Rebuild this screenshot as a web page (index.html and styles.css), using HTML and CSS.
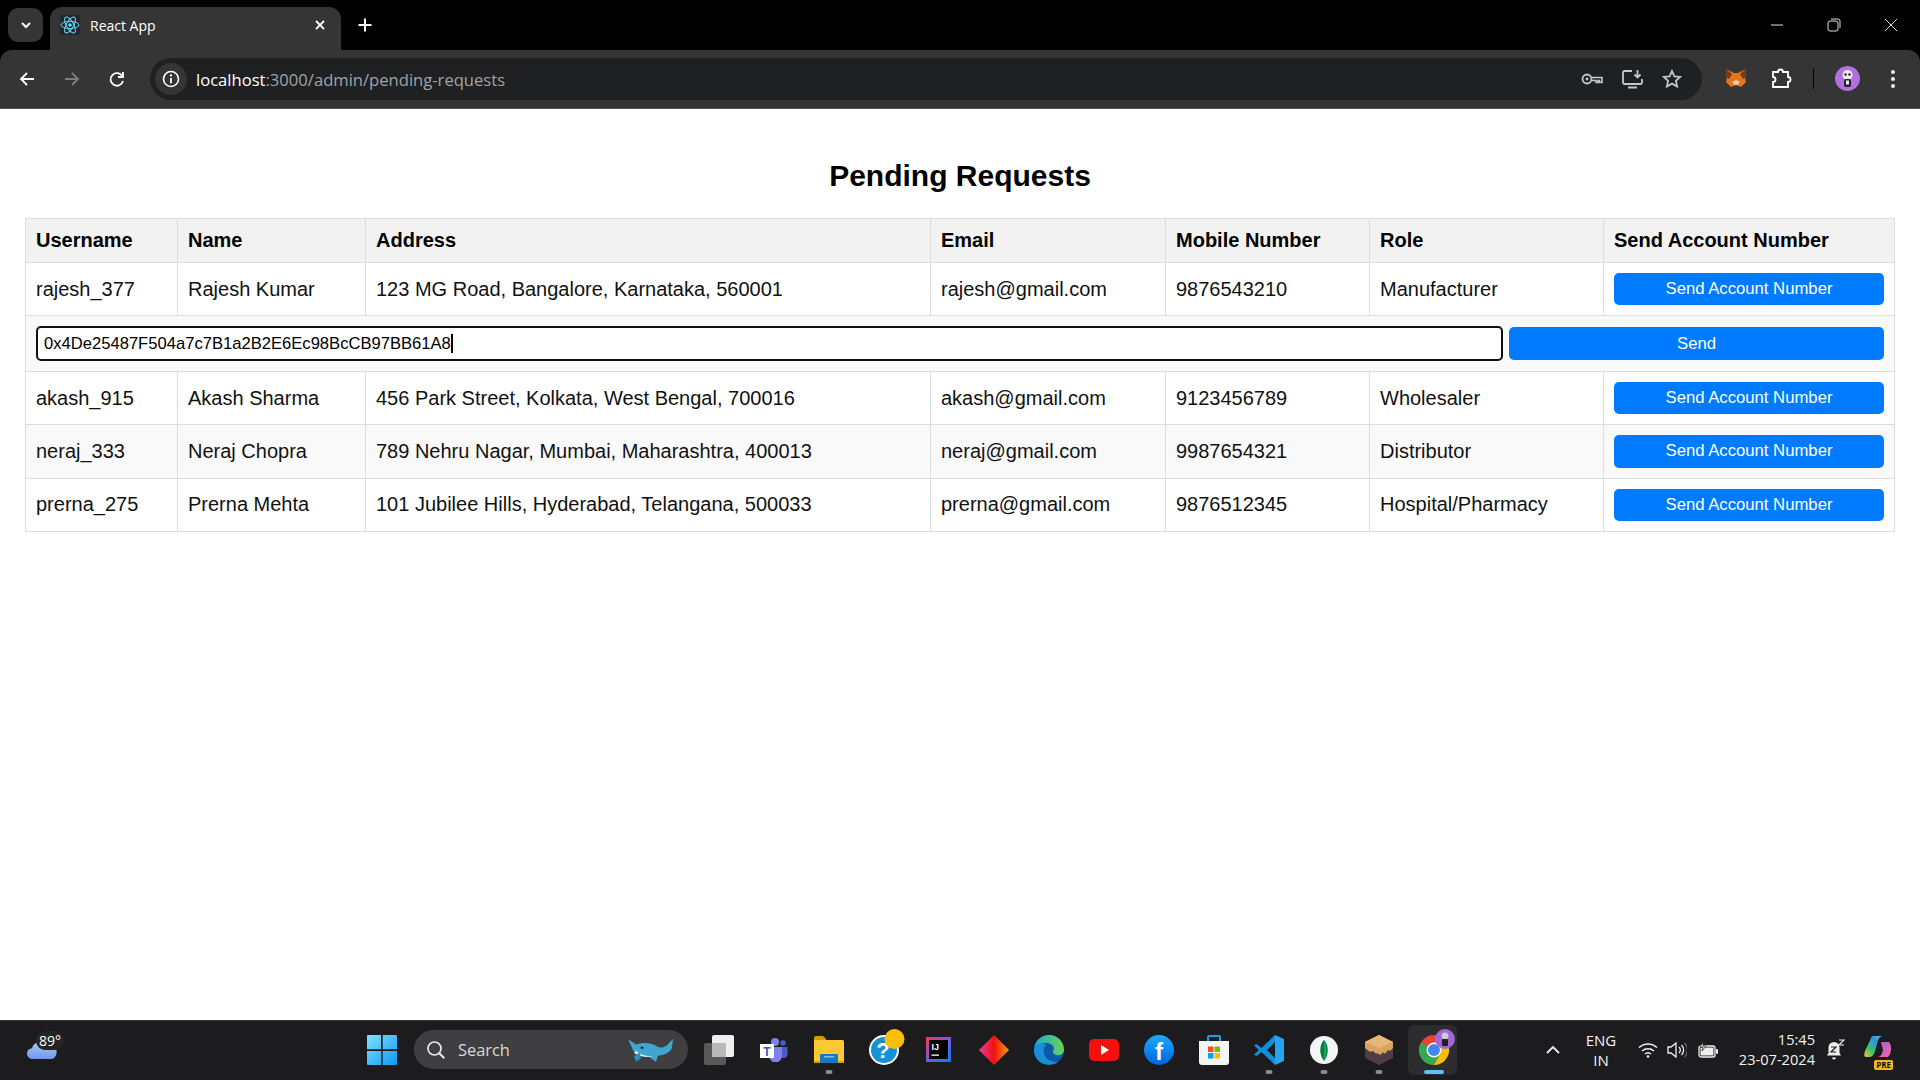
FILE: index.html
```html
<!DOCTYPE html>
<html lang="en">
<head>
  <meta charset="UTF-8">
  <title>React App</title>
  <link rel="stylesheet" href="styles.css">
</head>
<body>

<!-- Browser window top -->
<header class="browser">
  <div class="tabbar">
    <button class="tab-menu">
      <svg width="14" height="14" viewBox="0 0 14 14"><path d="M3 5l4 4 4-4" fill="none" stroke="#fff" stroke-width="2"/></svg>
    </button>
    <div class="tab">
      <svg class="favicon" width="20" height="20" viewBox="0 0 20 20">
        <rect width="20" height="20" rx="2" fill="#23272b"/>
        <g fill="none" stroke="#61dafb" stroke-width="1">
          <ellipse cx="10" cy="10" rx="9" ry="3.6"/>
          <ellipse cx="10" cy="10" rx="9" ry="3.6" transform="rotate(60 10 10)"/>
          <ellipse cx="10" cy="10" rx="9" ry="3.6" transform="rotate(120 10 10)"/>
        </g>
        <circle cx="10" cy="10" r="1.8" fill="#61dafb"/>
      </svg>
      <span class="tab-title">React App</span>
      <svg class="tab-close" width="12" height="12" viewBox="0 0 12 12"><path d="M2 2l8 8M10 2l-8 8" stroke="#fff" stroke-width="1.8"/></svg>
    </div>
    <svg class="tab-new" width="16" height="16" viewBox="0 0 16 16"><path d="M8 1.500v13M1.500 8h13" stroke="#fff" stroke-width="2"/></svg>
    <div class="window-controls">
      <svg width="14" height="14" viewBox="0 0 14 14"><path d="M1 7h12" stroke="#ddd" stroke-width="1"/></svg>
      <svg width="14" height="14" viewBox="0 0 14 14"><rect x="1" y="3" width="10" height="10" rx="2" fill="none" stroke="#ddd"/><path d="M4 1h7a2 2 0 0 1 2 2v7" fill="none" stroke="#ddd"/></svg>
      <svg width="14" height="14" viewBox="0 0 14 14"><path d="M1 1l12 12M13 1L1 13" stroke="#ddd" stroke-width="1"/></svg>
    </div>
  </div>

  <div class="toolbar">
    <div class="nav-buttons">
      <svg width="18" height="18" viewBox="0 0 18 18"><path d="M16 9H3M9 3L3 9l6 6" fill="none" stroke="#fff" stroke-width="1.800"/></svg>
      <svg width="18" height="18" viewBox="0 0 18 18"><path d="M2 9h13M9 3l6 6-6 6" fill="none" stroke="#7c7c7c" stroke-width="1.800"/></svg>
      <svg width="18" height="18" viewBox="0 0 18 18"><path d="M14.500 6.500A6.300 6.300 0 1 0 15 11M15 2v5h-5" fill="none" stroke="#fff" stroke-width="1.800"/></svg>
    </div>
    <div class="omnibox">
      <span class="site-info">
        <svg width="18" height="18" viewBox="0 0 18 18"><circle cx="9" cy="9" r="7.500" fill="none" stroke="#fff" stroke-width="1.600"/><path d="M9 8v5.200" stroke="#fff" stroke-width="1.800"/><circle cx="9" cy="5.400" r="1.100" fill="#fff"/></svg>
      </span>
      <span class="url"><span class="url-host">localhost</span>:3000/admin/pending-requests</span>
      <div class="omnibox-icons">
        <svg width="22" height="14" viewBox="0 0 22 14"><circle cx="6" cy="7" r="4.500" fill="none" stroke="#c4c7c5" stroke-width="1.800"/><circle cx="6" cy="7" r="1.400" fill="#c4c7c5"/><path d="M10.500 5.500h10.500v5h-2.500v-2h-1.500v2h-2v-2h-4.500" fill="none" stroke="#c4c7c5" stroke-width="1.600"/></svg>
        <svg width="21" height="20" viewBox="0 0 21 20"><path d="M10 2H2.500a1.500 1.500 0 0 0-1.500 1.500v10A1.500 1.500 0 0 0 2.500 15h16a1.500 1.500 0 0 0 1.500-1.500V10M6 18.500h9" fill="none" stroke="#c4c7c5" stroke-width="1.800"/><path d="M15.500 1v7M12.500 5.500l3 3 3-3" fill="none" stroke="#c4c7c5" stroke-width="1.800"/></svg>
        <svg width="20" height="20" viewBox="0 0 20 20"><path d="M10 2l2.400 5.300 5.800.6-4.300 3.900 1.200 5.700L10 14.600l-5.100 2.900 1.200-5.700L1.800 7.900l5.800-.6z" fill="none" stroke="#c4c7c5" stroke-width="1.800"/></svg>
      </div>
    </div>
    <div class="extensions">
      <svg class="ext-fox" width="22" height="21" viewBox="0 0 22 21">
        <path d="M1 1l8 4h4l8-4-1 8 1 5-5 5-2-1h-6l-2 1-5-5 1-5z" fill="#e2761b"/>
        <path d="M1 1l6 5-3 5-3-2zM21 1l-6 5 3 5 3-2z" fill="#763d16"/>
        <path d="M7 14l4 5 4-5-4-2z" fill="#f6c9a0"/>
        <path d="M9 17h4l-2 2z" fill="#233447"/>
      </svg>
      <svg class="ext-puzzle" width="21" height="21" viewBox="0 0 21 21"><path d="M2 4h5a2.500 2.500 0 0 1 5 0h5v5a2.500 2.500 0 0 1 0 5v5H2v-5a2.500 2.500 0 0 0 0-5z" fill="none" stroke="#fff" stroke-width="1.800"/></svg>
      <span class="ext-sep"></span>
      <svg class="ext-avatar" width="25" height="25" viewBox="0 0 25 25">
        <circle cx="12.500" cy="12.500" r="12.500" fill="#b26fe0"/>
        <circle cx="12.500" cy="9" r="5" fill="#eee"/>
        <circle cx="10.500" cy="8.500" r="1.200" fill="#222"/>
        <circle cx="14.500" cy="8.500" r="1.200" fill="#222"/>
        <rect x="9" y="13" width="7" height="8" rx="2" fill="#222"/>
        <rect x="11" y="14.500" width="3" height="4" fill="#eee"/>
      </svg>
      <svg class="ext-dots" width="6" height="20" viewBox="0 0 6 20"><circle cx="3" cy="3" r="2" fill="#eee"/><circle cx="3" cy="10" r="2" fill="#eee"/><circle cx="3" cy="17" r="2" fill="#eee"/></svg>
    </div>
  </div>
</header>

<!-- Page content -->
<main class="requests-page">
  <h2 class="requests-title">Pending Requests</h2>
  <table class="requests-table">
    <colgroup>
      <col class="col-username"><col class="col-name"><col class="col-address"><col class="col-email"><col class="col-mobile"><col class="col-role"><col class="col-action">
    </colgroup>
    <thead>
      <tr>
        <th>Username</th>
        <th>Name</th>
        <th>Address</th>
        <th>Email</th>
        <th>Mobile Number</th>
        <th>Role</th>
        <th>Send Account Number</th>
      </tr>
    </thead>
    <tbody>
      <tr>
        <td>rajesh_377</td>
        <td>Rajesh Kumar</td>
        <td>123 MG Road, Bangalore, Karnataka, 560001</td>
        <td>rajesh@gmail.com</td>
        <td>9876543210</td>
        <td>Manufacturer</td>
        <td><button class="send-btn">Send Account Number</button></td>
      </tr>
      <tr>
        <td colspan="7">
          <div class="account-form">
            <div class="account-input"><span>0x4De25487F504a7c7B1a2B2E6Ec98BcCB97BB61A8</span><span class="account-caret"></span></div>
            <button class="send-btn send-btn-form">Send</button>
          </div>
        </td>
      </tr>
      <tr>
        <td>akash_915</td>
        <td>Akash Sharma</td>
        <td>456 Park Street, Kolkata, West Bengal, 700016</td>
        <td>akash@gmail.com</td>
        <td>9123456789</td>
        <td>Wholesaler</td>
        <td><button class="send-btn">Send Account Number</button></td>
      </tr>
      <tr>
        <td>neraj_333</td>
        <td>Neraj Chopra</td>
        <td>789 Nehru Nagar, Mumbai, Maharashtra, 400013</td>
        <td>neraj@gmail.com</td>
        <td>9987654321</td>
        <td>Distributor</td>
        <td><button class="send-btn">Send Account Number</button></td>
      </tr>
      <tr>
        <td>prerna_275</td>
        <td>Prerna Mehta</td>
        <td>101 Jubilee Hills, Hyderabad, Telangana, 500033</td>
        <td>prerna@gmail.com</td>
        <td>9876512345</td>
        <td>Hospital/Pharmacy</td>
        <td><button class="send-btn">Send Account Number</button></td>
      </tr>
    </tbody>
  </table>
</main>

<!-- Windows taskbar -->
<footer class="taskbar">
  <div class="weather">
    <svg width="32" height="20" viewBox="0 0 34 22">
      <defs><linearGradient id="cloud" x1="0" y1="0" x2="0" y2="1"><stop offset="0" stop-color="#a9c6f5"/><stop offset="1" stop-color="#6f9bea"/></linearGradient></defs>
      <path d="M7 21a6 6 0 0 1-1-12 9 9 0 0 1 16-3 7.500 7.500 0 0 1 6 15z" fill="url(#cloud)"/>
    </svg>
    <span class="weather-temp">89°</span>
  </div>
  <svg class="win-logo" width="30" height="30" viewBox="0 0 30 30">
    <defs><linearGradient id="win" x1="0" y1="0" x2="1" y2="1"><stop offset="0" stop-color="#7ee3fb"/><stop offset="1" stop-color="#0f96f5"/></linearGradient></defs>
    <path d="M0 1a1 1 0 0 1 1-1h13v14.300H0zM15.700 0H29a1 1 0 0 1 1 1v13.300H15.700zM0 16h14.300v14H1a1 1 0 0 1-1-1zM15.700 16H30v13a1 1 0 0 1-1 1H15.700z" fill="url(#win)"/>
  </svg>
  <div class="task-search">
    <svg width="20" height="20" viewBox="0 0 20 20"><circle cx="8.500" cy="8.500" r="6.500" fill="none" stroke="#e8e8e8" stroke-width="1.700"/><path d="M13.300 13.300l5 5" stroke="#e8e8e8" stroke-width="2"/></svg>
    <span class="task-search-text">Search</span>
    <svg class="search-whale" width="50" height="28" viewBox="0 0 50 36" preserveAspectRatio="none">
      <path d="M2 4l8 7c6-3 15-3 22 3 4 2 8 0 11-5l4-5-1 11c-2 6-8 10-14 10l-2 8-7-6c-7 0-13-3-16-9z" fill="#3ea6cf"/>
      <path d="M10 19c5 6 12 8 19 6-7 3-16 2-21-3z" fill="#e9f5fa"/>
      <path d="M8 26l6-5 1 8-5 4z" fill="#2f8fb8"/>
      <circle cx="16" cy="15" r="1.500" fill="#123"/>
    </svg>
  </div>
  <div class="task-icons">
    <div class="task-item">
      <svg width="30" height="30" viewBox="0 0 30 30"><rect y="8" width="22" height="22" rx="2" fill="#595959"/><rect x="8" width="22" height="22" rx="2" fill="#efefef"/><rect x="8" y="8" width="14" height="14" fill="#b9b9b9"/></svg>
    </div>
    <div class="task-item">
      <svg width="28" height="24" viewBox="0 0 28 24"><circle cx="15" cy="4" r="4" fill="#7b83eb"/><circle cx="23" cy="5" r="2.800" fill="#5059c9"/><path d="M20 9h7.500v7a4 4 0 0 1-7.500 2z" fill="#5059c9"/><path d="M9 9h13v9a6.500 6.500 0 0 1-13 0z" fill="#7b83eb"/><rect y="6" width="14" height="14" fill="#fff"/><text class="icon-letter" x="7" y="17.500" fill="#4b53bc" text-anchor="middle" font-size="12" font-weight="700">T</text></svg>
    </div>
    <div class="task-item">
      <svg width="30" height="27" viewBox="0 0 30 27"><path d="M0 2a2 2 0 0 1 2-2h7l3 3v3H0z" fill="#d79b00"/><rect y="4" width="30" height="23" rx="1.500" fill="#fcc934"/><rect y="25" width="30" height="2" fill="#e09c00"/><path d="M6 19a1 1 0 0 1 1-1h16a1 1 0 0 1 1 1v8H6z" fill="#1878c4"/><rect x="10" y="20" width="10" height="1.500" fill="#7cc1ee"/></svg>
      <span class="run-dot"></span>
    </div>
    <div class="task-item">
      <svg class="icon-over" width="30" height="30" viewBox="0 0 30 30"><circle cx="15" cy="15" r="15" fill="#fff"/><circle cx="15" cy="15" r="13" fill="#1692d4"/><text class="icon-letter" x="14" y="23" fill="#fff" text-anchor="middle" font-size="22" font-weight="700">?</text><circle cx="25.500" cy="4" r="10" fill="#f9bf0a"/></svg>
    </div>
    <div class="task-item">
      <svg width="25" height="25" viewBox="0 0 25 25"><defs><linearGradient id="ij" x1="0" y1="0" x2="1" y2="1"><stop offset="0" stop-color="#fe315d"/><stop offset=".5" stop-color="#7c59d8"/><stop offset="1" stop-color="#087cfa"/></linearGradient></defs><rect width="25" height="25" fill="url(#ij)"/><rect x="3" y="3" width="19" height="19" fill="#000"/><text class="icon-letter" x="5.500" y="13" fill="#fff" font-size="9" font-weight="700">IJ</text><rect x="5.500" y="17.500" width="7.500" height="1.300" fill="#fff"/></svg>
    </div>
    <div class="task-item">
      <svg width="30" height="30" viewBox="0 0 30 30"><defs><linearGradient id="dia" x1="0" y1="0" x2="1" y2="0"><stop offset="0" stop-color="#e83ea0"/><stop offset=".5" stop-color="#f0100f"/><stop offset="1" stop-color="#f5a00a"/></linearGradient></defs><path d="M15 0l15 15-15 15L0 15z" fill="url(#dia)"/></svg>
    </div>
    <div class="task-item">
      <svg width="30" height="30" viewBox="0 0 30 30"><defs><linearGradient id="edge" x1="0" y1="0" x2="1" y2="0"><stop offset="0" stop-color="#1ba9d8"/><stop offset="1" stop-color="#6bd24f"/></linearGradient></defs><circle cx="15" cy="15" r="15" fill="#0f5aa8"/><path d="M0 14C1 5 8 0 15 0c9 0 15 7 15 15 0 4-4 6-8 5-3-1-4-3-2-6 0-4-4-6-8-6-6 0-11 2-12 6z" fill="url(#edge)"/><path d="M12 10c-5 5-2 18 12 17-10 7-25 0-24-13 2-5 8-8 12-4z" fill="#1b8ed8"/></svg>
    </div>
    <div class="task-item">
      <svg width="30" height="22" viewBox="0 0 30 22"><rect width="30" height="22" rx="5" fill="#f50f0f"/><path d="M12 6l8 5-8 5z" fill="#fff"/></svg>
    </div>
    <div class="task-item">
      <svg width="30" height="30" viewBox="0 0 30 30"><defs><linearGradient id="fb" x1="0" y1="0" x2="0" y2="1"><stop offset="0" stop-color="#18acfe"/><stop offset="1" stop-color="#0163e0"/></linearGradient></defs><circle cx="15" cy="15" r="15" fill="url(#fb)"/><text class="icon-letter" x="15" y="25" fill="#fff" text-anchor="middle" font-size="24" font-weight="700">f</text></svg>
    </div>
    <div class="task-item">
      <svg width="30" height="30" viewBox="0 0 30 30"><path d="M9 7V2a1 1 0 0 1 1-1h10a1 1 0 0 1 1 1v5" fill="none" stroke="#18a0e0" stroke-width="2"/><path d="M0 6h30v21a3 3 0 0 1-3 3H3a3 3 0 0 1-3-3z" fill="#f4f4f4"/><rect x="9" y="11.500" width="5.500" height="5.500" fill="#f25022"/><rect x="15.500" y="11.500" width="5.500" height="5.500" fill="#7fba00"/><rect x="9" y="18" width="5.500" height="5.500" fill="#00a4ef"/><rect x="15.500" y="18" width="5.500" height="5.500" fill="#ffb900"/></svg>
    </div>
    <div class="task-item">
      <svg width="30" height="30" viewBox="0 0 30 30"><path d="M21 0L7.500 13 2.500 9 0 10.500 5 15 0 19.500 2.500 21l5-4L21 30l0-7-8-8 8-8z" fill="#0e8fdc"/><path d="M21 0l9 4v22l-9 4z" fill="#24a5ef"/></svg>
      <span class="run-dot"></span>
    </div>
    <div class="task-item">
      <svg width="28" height="28" viewBox="0 0 28 28"><circle cx="14" cy="14" r="14" fill="#f5f7f6"/><path d="M14 4c5 5 5 15 0 21-5-6-5-16 0-21z" fill="#0b7a4b"/><path d="M14 4c3 5 3 15 0 21z" fill="#13aa52"/></svg>
      <span class="run-dot"></span>
    </div>
    <div class="task-item">
      <svg width="28" height="30" viewBox="0 0 28 30"><path d="M14 0l14 7v16l-14 7-14-7V7z" fill="#4f3d45"/><path d="M14 0l14 7v6c-2 2-3 4-5 2-2 3-3 5-5 2-2 3-4 4-5 1-3 2-4-2-5-2-3 2-4 0-8-3V7z" fill="#d8a25f"/><path d="M14 0l14 7-14 6L0 7z" fill="#e6b778"/></svg>
      <span class="run-dot"></span>
    </div>
    <div class="task-item task-item-active">
      <svg class="icon-over" width="30" height="30" viewBox="0 0 30 30"><circle cx="15" cy="15" r="15" fill="#e94235"/><path d="M15 15L2 7.500A15 15 0 0 0 15 30l7-12z" fill="#34a853"/><path d="M15 15l7 3-7 12A15 15 0 0 0 28 7.500H15z" fill="#fbbc04"/><circle cx="15" cy="15" r="7.500" fill="#fff"/><circle cx="15" cy="15" r="6" fill="#4285f4"/><circle cx="26" cy="4" r="10" fill="#a067d6"/><circle cx="26" cy="1" r="3.500" fill="#ccc"/><rect x="23" y="4" width="6" height="7" rx="1" fill="#222"/></svg>
      <span class="run-bar"></span>
    </div>
  </div>
  <div class="tray">
    <svg class="tray-chevron" width="16" height="10" viewBox="0 0 16 10"><path d="M2 8l6-6 6 6" fill="none" stroke="#eee" stroke-width="1.800"/></svg>
    <div class="tray-lang"><span>ENG</span><span>IN</span></div>
    <svg class="tray-wifi" width="20" height="16" viewBox="0 0 20 16"><path d="M1 5.500a13 13 0 0 1 18 0M4 9a9 9 0 0 1 12 0M7 12a4.500 4.500 0 0 1 6 0" fill="none" stroke="#eee" stroke-width="1.500"/><circle cx="10" cy="14.500" r="1.300" fill="#eee"/></svg>
    <svg class="tray-sound" width="20" height="16" viewBox="0 0 20 16"><path d="M1 5h3l5-4v14l-5-4H1z" fill="none" stroke="#eee" stroke-width="1.300"/><path d="M12 5a4 4 0 0 1 0 6" fill="none" stroke="#eee" stroke-width="1.300"/><path d="M14.500 3a7 7 0 0 1 0 10" fill="none" stroke="#eee" stroke-width="1.300"/><path d="M17.500 1a10 10 0 0 1 0 14" fill="none" stroke="#666" stroke-width="1.300"/></svg>
    <svg class="tray-battery" width="21" height="16" viewBox="0 0 21 16"><rect x="1" y="4" width="16" height="11" rx="2" fill="none" stroke="#eee" stroke-width="1.300"/><rect x="2.500" y="5.500" width="13" height="8" fill="#eee"/><rect x="18" y="7" width="2" height="5" rx="1" fill="#eee"/><path d="M5 0L2 5h3l-1 4 4-5H5z" fill="#eee" stroke="#1c1c1e" stroke-width=".7"/></svg>
    <div class="tray-clock"><span>15:45</span><span>23-07-2024</span></div>
    <svg class="tray-bell" width="19" height="22" viewBox="0 0 19 22"><path d="M8 3a5.500 5.500 0 0 0-5.500 5.500V14L1 16.500h14L13.500 14V8.500A5.500 5.500 0 0 0 8 3z" fill="#eee"/><path d="M6 18.500a2 2 0 0 0 4 0z" fill="#eee"/><path d="M5 8h5l-5 5h5" fill="none" stroke="#1c1c1e" stroke-width="1.200"/><path d="M13 1h5l-5 5h5" fill="none" stroke="#eee" stroke-width="1.200"/></svg>
    <div class="tray-copilot">
      <svg width="28" height="24" viewBox="0 0 28 24"><defs><linearGradient id="cop" x1="0" y1="1" x2="1" y2="0"><stop offset="0" stop-color="#f6c338"/><stop offset=".35" stop-color="#38c26d"/><stop offset=".7" stop-color="#2d8fe8"/><stop offset="1" stop-color="#64d0f0"/></linearGradient><linearGradient id="cop2" x1="0" y1="0" x2="1" y2="1"><stop offset="0" stop-color="#b05be6"/><stop offset="1" stop-color="#f0699a"/></linearGradient></defs><path d="M8 1h11c-4 0-5 4-6 8l-2 7c-1 4-3 6-6 6H2C0 22 0 19 1 16z" fill="url(#cop)"/><path d="M17 7h8c2 2 3 8 1 12l-2 3H13c4 0 5-3 6-7z" fill="url(#cop2)"/></svg>
      <span class="tray-pre">PRE</span>
    </div>
  </div>
</footer>

</body>
</html>
```

FILE: styles.css
```css
* {
  box-sizing: border-box;
}
body {
  display: flex;
  flex-direction: column;
  height: 100vh;
  margin: 0;
  overflow: hidden;
  font-family: "Liberation Sans", Arial, sans-serif;
  background: #fff;
}
/* Browser top */
.browser {
  flex: none;
  height: 109px;
  background: #000;
  color: #fff;
  font-family: "Open Sans", "Noto Sans", sans-serif;
}
.tabbar {
  display: flex;
  align-items: flex-end;
  height: 50px;
  padding-left: 8px;
}
.tab-menu {
  display: flex;
  align-items: center;
  justify-content: center;
  width: 35px;
  height: 34px;
  margin-right: 7px;
  margin-bottom: 8px;
  padding: 0;
  border: none;
  border-radius: 10px;
  background: #353535;
}
.tab {
  display: flex;
  align-items: center;
  width: 291px;
  height: 43px;
  padding: 0 15px 7px 10px;
  border-radius: 12px 12px 0 0;
  background: #353535;
}
.tab-title {
  flex: 1;
  margin-left: 10px;
  font-size: 14px;
}
.tab-new {
  margin: 0 0 17px 16px;
}
.window-controls {
  display: flex;
  gap: 43px;
  margin: 0 22px 18px auto;
}
.toolbar {
  display: flex;
  align-items: center;
  height: 59px;
  padding-bottom: 1px;
  border-radius: 12px 12px 0 0;
  border-bottom: 1px solid #555;
  background: #353535;
}
.nav-buttons {
  display: flex;
  gap: 27px;
  width: 150px;
  padding-left: 18px;
}
.omnibox {
  display: flex;
  align-items: center;
  width: 1552px;
  height: 42px;
  padding: 0 20px 0 5px;
  border-radius: 21px;
  background: #1f2022;
}
.site-info {
  display: flex;
  align-items: center;
  justify-content: center;
  width: 32px;
  height: 32px;
  border-radius: 50%;
  background: #353535;
}
.url {
  flex: 1;
  margin-left: 9px;
  padding-top: 1px;
  font-size: 16.6px;
  color: #a0a3a6;
}
.url-host {
  color: #fff;
}
.omnibox-icons {
  display: flex;
  align-items: center;
  gap: 19px;
}
.extensions {
  display: flex;
  align-items: center;
  flex: 1;
  padding-left: 23px;
}
.ext-puzzle {
  margin-left: 24px;
}
.ext-sep {
  width: 1px;
  height: 20px;
  margin-left: 21px;
  background: #000;
}
.ext-avatar {
  margin-left: 21px;
}
.ext-dots {
  margin-left: 30px;
}
/* Pending requests */
.requests-page {
  flex: 1;
  padding: 0 25px;
}
.requests-title {
  margin: 48px 0 24px;
  font-size: 30px;
  line-height: 37px;
  text-align: center;
  color: #000;
}
.requests-table {
  width: 1869px;
  table-layout: fixed;
  border-collapse: collapse;
  font-size: 20px;
  color: #111;
}
.col-username { width: 152px; }
.col-name { width: 188px; }
.col-address { width: 565px; }
.col-email { width: 235px; }
.col-mobile { width: 204px; }
.col-role { width: 234px; }
.col-action { width: 291px; }
.requests-table th,
.requests-table td {
  padding: 10px;
  border: 1px solid #ddd;
  text-align: left;
}
.requests-table th {
  background: #f2f2f2;
  color: #000;
}
.requests-table tbody tr:nth-child(even) {
  background: #f9f9f9;
}
.send-btn {
  display: block;
  width: 100%;
  height: 32.2px;
  padding: 0;
  border: none;
  border-radius: 5px;
  background: #007bff;
  font-family: "Liberation Sans", Arial, sans-serif;
  font-size: 16.7px;
  color: #fff;
}
.account-form {
  display: flex;
  gap: 6px;
  align-items: center;
}
.account-input {
  display: flex;
  align-items: center;
  flex: 1;
  height: 35px;
  padding: 0 6px;
  border: 2px solid #101010;
  border-radius: 5px;
  background: #fff;
  font-size: 16.6px;
  color: #000;
}
.account-caret {
  width: 2px;
  height: 19px;
  background: #000;
}
.send-btn-form {
  flex: none;
  width: 375px;
  height: 33px;
}
/* Taskbar */
.taskbar {
  display: flex;
  align-items: center;
  flex: none;
  height: 60px;
  padding-bottom: 2px;
  border-top: 1px solid #333;
  background: #1c1c1e;
  color: #f2f2f2;
  font-family: "Open Sans", "Noto Sans", sans-serif;
}
.weather {
  position: relative;
  width: 367px;
  padding: 6px 0 0 26px;
}
.weather-temp {
  position: absolute;
  top: -3px;
  left: 36px;
  padding: 0 3px;
  border-radius: 9px;
  background: #242424;
  font-size: 14px;
  color: #fff;
}
.win-logo {
  flex: none;
  margin-right: 17px;
}
.task-search {
  display: flex;
  align-items: center;
  flex: none;
  width: 274px;
  height: 39px;
  margin-right: 3px;
  padding: 0 12px;
  border-radius: 20px;
  background: #3f3f41;
}
.task-search-text {
  flex: 1;
  margin-left: 12px;
  font-size: 16.4px;
  color: #d8d8d8;
}
.task-icons {
  display: flex;
  flex: none;
}
.task-item {
  position: relative;
  display: flex;
  align-items: center;
  justify-content: center;
  width: 55px;
  height: 50px;
}
.icon-over {
  position: relative;
  overflow: visible;
}
.task-item-active::before {
  content: "";
  position: absolute;
  top: 0;
  bottom: 0;
  left: 2px;
  right: 4px;
  border-radius: 6px;
  background: #2c2c2e;
}
.icon-letter {
  font-family: "Liberation Sans", Arial, sans-serif;
}
.run-dot,
.run-bar {
  position: absolute;
  left: 50%;
  bottom: 1px;
  height: 4px;
  border-radius: 2px;
  transform: translateX(-50%);
}
.run-dot {
  width: 7px;
  background: #8a8a8a;
}
.run-bar {
  width: 20px;
  background: #5cc3f5;
}
.tray {
  display: flex;
  align-items: center;
  flex: 1;
  padding-left: 84px;
}
.tray-lang {
  display: flex;
  flex-direction: column;
  align-items: center;
  width: 40px;
  margin-left: 20px;
  font-size: 15px;
  line-height: 20px;
}
.tray-wifi {
  margin-left: 17px;
}
.tray-sound {
  margin-left: 9px;
}
.tray-battery {
  margin-left: 11px;
}
.tray-clock {
  display: flex;
  flex-direction: column;
  align-items: flex-end;
  width: 88px;
  margin-left: 8px;
  padding-bottom: 2px;
  font-size: 14.6px;
  line-height: 20px;
}
.tray-bell {
  margin-left: 11px;
}
.tray-copilot {
  position: relative;
  margin-left: 19px;
}
.tray-pre {
  position: absolute;
  right: -1px;
  bottom: -6px;
  padding: 0 2px;
  border-radius: 2px;
  background: #f4b81c;
  font-size: 8px;
  font-weight: 700;
  line-height: 10px;
  color: #111;
}
```
